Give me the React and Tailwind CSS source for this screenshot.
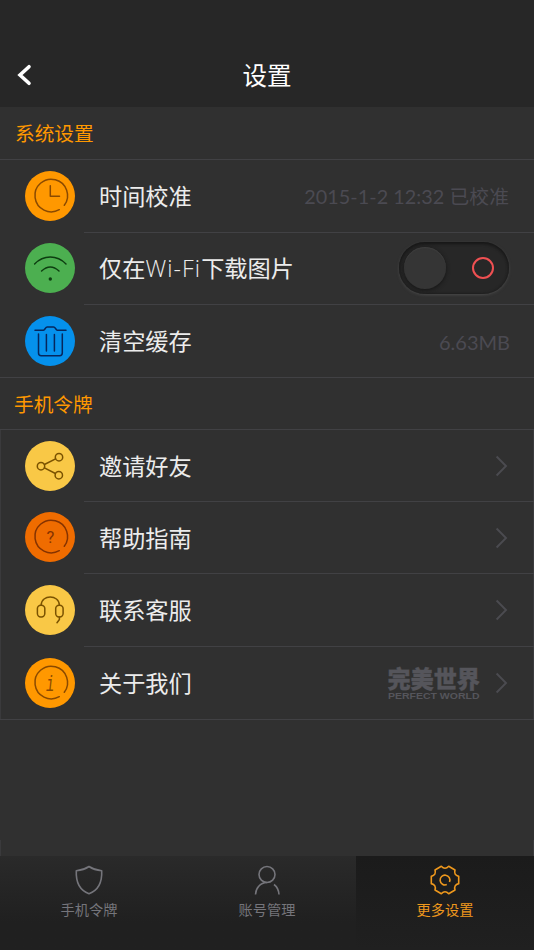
import React from "react";

function ClockIcon() {
  return (
    <g stroke="#8a4a00">
      <path d="M39.3 34.3A16.3 16.3 0 1 0 34.3 38.7" />
      <path d="M25.3 14.7V25.3H34.5" />
    </g>
  );
}

function WifiIcon() {
  return (
    <g stroke="#0d3d10">
      <path d="M9.6 21C18.5 11.7 32 11.7 41 21" />
      <path d="M16.6 28Q25.3 20 34 28" />
      <circle cx="25.3" cy="36" r="1.7" fill="#0d3d10" stroke="none" />
    </g>
  );
}

function TrashIcon() {
  return (
    <g stroke="#06265c">
      <path d="M10 14.2H18.5C20 14.2 20.3 11 22.3 11H28.5C30.5 11 30.8 14.2 32.3 14.2H41" />
      <path d="M13.5 18V37A2.7 2.7 0 0 0 16.2 39.7H34.6A2.7 2.7 0 0 0 37.3 37V18" />
      <path d="M21.4 18.5V35M29.4 18.5V35" />
    </g>
  );
}

function ShareIcon() {
  return (
    <g stroke="#7a5200">
      <circle cx="16" cy="25.2" r="3.7" />
      <circle cx="34" cy="16.2" r="3.7" />
      <circle cx="33.8" cy="34.2" r="3.7" />
      <path d="M19.4 23.5L30.6 17.9M19.4 26.9L30.4 32.5" />
    </g>
  );
}

function HelpIcon() {
  return (
    <g stroke="#853300">
      <path d="M39.3 34.3A16.3 16.3 0 1 0 34.3 38.7" />
      <text x="25.5" y="31" textAnchor="middle" fill="#853300" stroke="none" fontSize="16.5" fontFamily="Roboto, sans-serif">
        ?
      </text>
    </g>
  );
}

function HeadsetIcon() {
  return (
    <g stroke="#7a5200">
      <rect x="12.4" y="20.2" width="7.4" height="11.8" rx="3.4" />
      <rect x="30.7" y="20.2" width="7.4" height="11.8" rx="3.4" />
      <path d="M16.1 20.2C16.5 9.2 34 9.2 34.4 20.2" />
      <path d="M34.4 32V34.5L32 37.7" />
    </g>
  );
}

function InfoIcon() {
  return (
    <g stroke="#8a4a00">
      <path d="M39.3 34.3A16.3 16.3 0 1 0 34.3 38.7" />
      <text transform="translate(25 33) scale(0.62 1)" textAnchor="middle" fill="#8a4a00" stroke="none" fontSize="22" fontStyle="italic" fontFamily="Liberation Mono, monospace">
        i
      </text>
    </g>
  );
}

function Badge({ color, children }) {
  return (
    <svg width="50" height="50" viewBox="0 0 50 50" fill="none" strokeWidth="1.5" strokeLinecap="round" strokeLinejoin="round" className="shrink-0">
      <circle cx="25" cy="25" r="25" fill={color} />
      {children}
    </svg>
  );
}

function Chevron() {
  return (
    <svg width="14" height="22" viewBox="0 0 14 22" fill="none" stroke="#4b4b50" strokeWidth="1.9">
      <path d="M1.6 1.5L11 11L1.6 20.5" />
    </svg>
  );
}

function Row({ icon, color, label, height, pad = "pt-[11px]", last, children }) {
  return (
    <div className={`flex items-stretch ${height} ${last ? "border-b border-[#414144]" : ""}`}>
      <div className={`flex w-[84px] shrink-0 items-start pl-[25px] ${pad}`}>
        <Badge color={color}>{icon}</Badge>
      </div>
      <div className={`flex flex-1 items-center justify-between pl-[15px] ${last ? "" : "border-b border-[#414144]"}`}>
        <span className="text-[23.2px] leading-none text-[#ececec] whitespace-nowrap">{label}</span>
        {children}
      </div>
    </div>
  );
}

function SectionTitle({ children, className }) {
  return (
    <div className={`flex items-center border-b border-[#414144] text-[19.7px] leading-none text-[#ff9800] ${className}`}>
      {children}
    </div>
  );
}

function Toggle() {
  return (
    <div className="mr-[25px] mb-px flex h-[52px] w-[110px] items-center justify-between rounded-full bg-[#272727] pl-[5px] pr-[15px] shadow-[inset_0_2px_3px_#181818,inset_0_0_3px_#1c1c1c,0_1px_3px_#4a4a4a]">
      <div className="h-[42px] w-[42px] rounded-full bg-[#353535] shadow-[0_1px_4px_#151515,inset_0_1px_1px_#3e3e3e]" />
      <div className="h-[22px] w-[22px] rounded-full border-2 border-[#ef5052]" />
    </div>
  );
}

function Brand() {
  return (
    <svg width="93" height="36" viewBox="0 0 93 36" fill="#55555b" className="mr-[14px] overflow-visible">
      <text x="-0.5" y="22.5" fontSize="24" fontWeight="900" textLength="92.5" lengthAdjust="spacingAndGlyphs" fontFamily="'Noto Sans CJK SC', sans-serif" stroke="#55555b" strokeWidth="0.4">
        完美世界
      </text>
      <text x="0" y="33.5" fontSize="9.8" fontWeight="700" textLength="91.5" lengthAdjust="spacingAndGlyphs" fontFamily="'Liberation Sans', sans-serif">
        PERFECT WORLD
      </text>
    </svg>
  );
}

function ShieldIcon() {
  return (
    <path d="M15 1.5C11 4.2 7 5.3 2.3 5.8C1.8 17 6 25.5 15 28.7C24 25.5 28.2 17 27.7 5.8C23 5.3 19 4.2 15 1.5Z" />
  );
}

function UserIcon() {
  return (
    <>
      <circle cx="15" cy="9.5" r="8" />
      <path d="M3.5 29.5C3.8 23 8 17.8 15 17.5M22 19.5C25 21.8 26.8 25.5 27 29.5" />
    </>
  );
}

function GearIcon() {
  return (
    <>
      <path d="M11.3 1.3Q15 5.2 18.7 1.3L25 5Q23.5 10.1 28.7 11.35V18.65Q23.5 19.9 25 25L18.7 28.7Q15 24.8 11.3 28.7L5 25Q6.5 19.9 1.3 18.65V11.35Q6.5 10.1 5 5Z" />
      <path d="M19.5 17A4.9 4.9 0 1 0 16.8 19.6" />
    </>
  );
}

function Tab({ label, icon, active }) {
  return (
    <div
      className={`flex w-[178px] flex-col items-center pt-[9px] ${
        active ? "bg-linear-to-b from-[#1b1b1b] to-[#202020] text-[#ee981d]" : "text-[#75757b]"
      }`}
    >
      <svg width="30" height="31" viewBox="0 0 30 31" fill="none" stroke="currentColor" strokeWidth="1.6" strokeLinejoin="round">
        {icon}
      </svg>
      <span className="mt-[5px] text-[14.2px] leading-4">{label}</span>
    </div>
  );
}

function App() {
  return (
    <div className="flex h-[950px] w-[534px] flex-col overflow-hidden bg-[#303030] font-['Noto_Sans_CJK_SC',sans-serif]">
      <header className="grid h-[107px] shrink-0 grid-cols-3 items-center bg-[#272727] pt-[43px]">
        <svg width="16" height="22" viewBox="0 0 16 22" fill="none" stroke="#fff" strokeWidth="3.6" strokeLinecap="round" className="ml-4">
          <path d="M13 2.7L4 11L13 19.3" />
        </svg>
        <h1 className="text-center text-[24.5px] leading-none text-white">设置</h1>
      </header>

      <main className="flex flex-1 flex-col">
        <SectionTitle className="h-[53px] pl-[15px]">系统设置</SectionTitle>
        <Row icon={<ClockIcon />} color="#ff9800" label="时间校准" height="h-[73px]">
          <span className="mr-[25px] pt-0.5 font-[Lato,'Noto_Sans_CJK_SC',sans-serif] text-[19.8px] leading-none tracking-[0.05px] text-[#4b4a52]">
            2015-1-2 12:32 已校准
          </span>
        </Row>
        <Row
          icon={<WifiIcon />}
          color="#4caf50"
          label={<>仅在<span className="font-['Open_Sans'] font-light tracking-[1.1px]">Wi-Fi</span>下载图片</>}
          height="h-[72px]"
          pad="pt-[10px]"
        >
          <Toggle />
        </Row>
        <Row icon={<TrashIcon />} color="#0591ec" label="清空缓存" height="h-[73px]" last>
          <span className="mr-6 pt-0.5 font-[Lato,sans-serif] text-[20px] leading-none text-[#4b4a52]">6.63MB</span>
        </Row>

        <SectionTitle className="h-[52px] pl-[14px]">手机令牌</SectionTitle>
        <div className="shadow-[inset_1px_0_#3a3a3c,inset_-1px_0_#3a3a3c]">
          <Row icon={<ShareIcon />} color="#f9c846" label="邀请好友" height="h-[72px]">
            <div className="mr-[25px]"><Chevron /></div>
          </Row>
          <Row icon={<HelpIcon />} color="#ef6c00" label="帮助指南" height="h-[72px]" pad="pt-[10px]">
            <div className="mr-[25px]"><Chevron /></div>
          </Row>
          <Row icon={<HeadsetIcon />} color="#f9c846" label="联系客服" height="h-[73px]">
            <div className="mr-[25px]"><Chevron /></div>
          </Row>
          <Row icon={<InfoIcon />} color="#ff9800" label="关于我们" height="h-[73px]" last>
            <div className="mr-[25px] flex items-center">
              <Brand />
              <Chevron />
            </div>
          </Row>
        </div>
        <div className="mt-auto h-4 border-x border-[#3a3a3c]" />
      </main>

      <nav className="flex h-[94px] shrink-0 bg-linear-to-b from-[#2a2a2a] to-[#202020] to-70%">
        <Tab label="手机令牌" icon={<ShieldIcon />} />
        <Tab label="账号管理" icon={<UserIcon />} />
        <Tab label="更多设置" icon={<GearIcon />} active />
      </nav>
    </div>
  );
}

export default App;
